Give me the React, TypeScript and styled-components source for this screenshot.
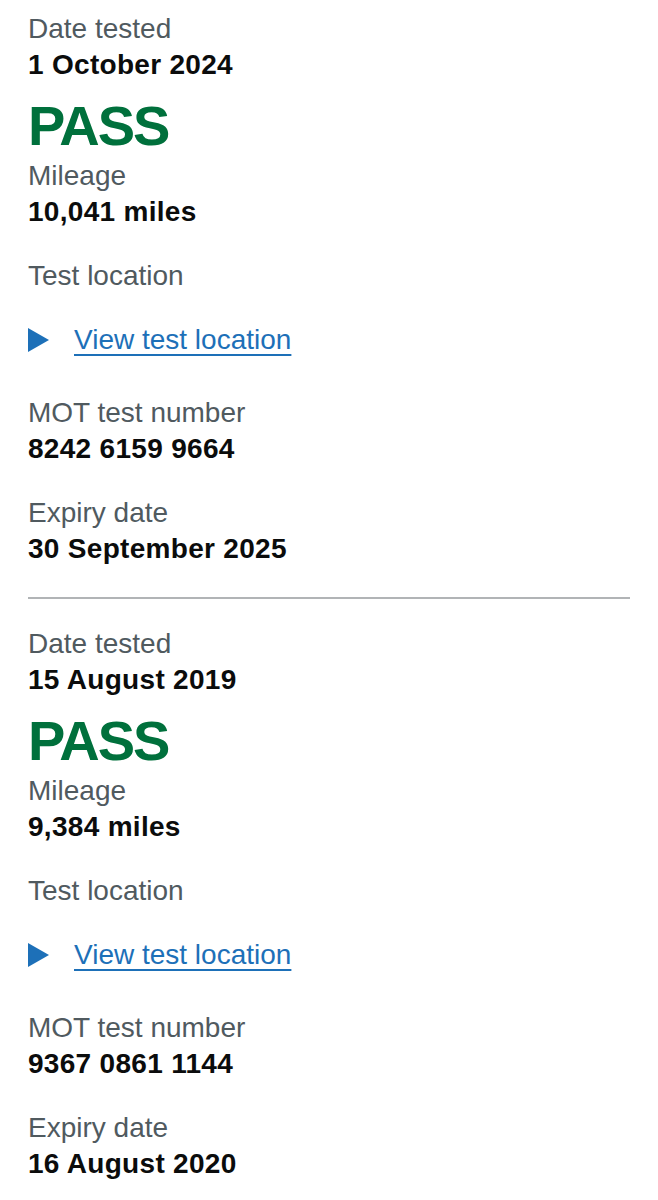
import React from 'react';
import styled, { createGlobalStyle } from 'styled-components';

const GlobalStyle = createGlobalStyle`
  html, body {
    margin: 0;
    padding: 0;
    background: #ffffff;
  }
  body {
    font-family: "Liberation Sans", Arial, sans-serif;
    color: #0b0c0c;
    -webkit-font-smoothing: antialiased;
  }
`;

const Page = styled.main`
  padding: 11px 28px 0;
  width: 658px;
  box-sizing: border-box;
`;

const Record = styled.section`
  display: flex;
  flex-direction: column;
`;

const Group = styled.div<{ $after?: number }>`
  display: flex;
  flex-direction: column;
  margin-bottom: ${(p) => (p.$after ?? 28)}px;
`;

const Label = styled.div`
  font-size: 28px;
  line-height: 36px;
  color: #505a5f;
  font-weight: 400;
`;

const Value = styled.div`
  font-size: 28px;
  line-height: 36px;
  font-weight: 700;
  letter-spacing: 0.3px;
  color: #0b0c0c;
`;

const Result = styled.div`
  font-size: 56px;
  line-height: 60px;
  font-weight: 700;
  letter-spacing: -2px;
  color: #00703c;
  margin: 13px 0 2px;
`;

const Summary = styled.div`
  display: flex;
  align-items: center;
  gap: 25px;
  height: 36px;
  cursor: pointer;
`;

const Arrow = styled.svg`
  width: 21px;
  height: 24px;
  flex: none;
`;

const SummaryLink = styled.a`
  font-size: 28px;
  line-height: 36px;
  color: #1d70b8;
  text-decoration: underline;
  text-decoration-thickness: 2px;
  text-underline-offset: 5px;
`;

const Divider = styled.hr`
  margin: 30px 0 27px;
  border: 0;
  border-top: 2px solid #b1b4b6;
`;

type Test = {
  date: string;
  result: string;
  mileage: string;
  number: string;
  expiry: string;
};

const tests: Test[] = [
  {
    date: '1 October 2024',
    result: 'PASS',
    mileage: '10,041 miles',
    number: '8242 6159 9664',
    expiry: '30 September 2025',
  },
  {
    date: '15 August 2019',
    result: 'PASS',
    mileage: '9,384 miles',
    number: '9367 0861 1144',
    expiry: '16 August 2020',
  },
];

const TestRecord = ({ test }: { test: Test }) => (
  <Record>
    <Group $after={0}>
      <Label>Date tested</Label>
      <Value>{test.date}</Value>
    </Group>
    <Result>{test.result}</Result>
    <Group>
      <Label>Mileage</Label>
      <Value>{test.mileage}</Value>
    </Group>
    <Group>
      <Label>Test location</Label>
    </Group>
    <Group $after={37}>
      <Summary>
        <Arrow viewBox="0 0 21 24" aria-hidden="true">
          <polygon points="0,0 21,12 0,24" fill="#1d70b8" />
        </Arrow>
        <SummaryLink>View test location</SummaryLink>
      </Summary>
    </Group>
    <Group>
      <Label>MOT test number</Label>
      <Value>{test.number}</Value>
    </Group>
    <Group $after={0}>
      <Label>Expiry date</Label>
      <Value>{test.expiry}</Value>
    </Group>
  </Record>
);

export default function App() {
  return (
    <>
      <GlobalStyle />
      <Page>
        {tests.map((t, i) => (
          <React.Fragment key={t.number}>
            {i > 0 && <Divider />}
            <TestRecord test={t} />
          </React.Fragment>
        ))}
      </Page>
    </>
  );
}
